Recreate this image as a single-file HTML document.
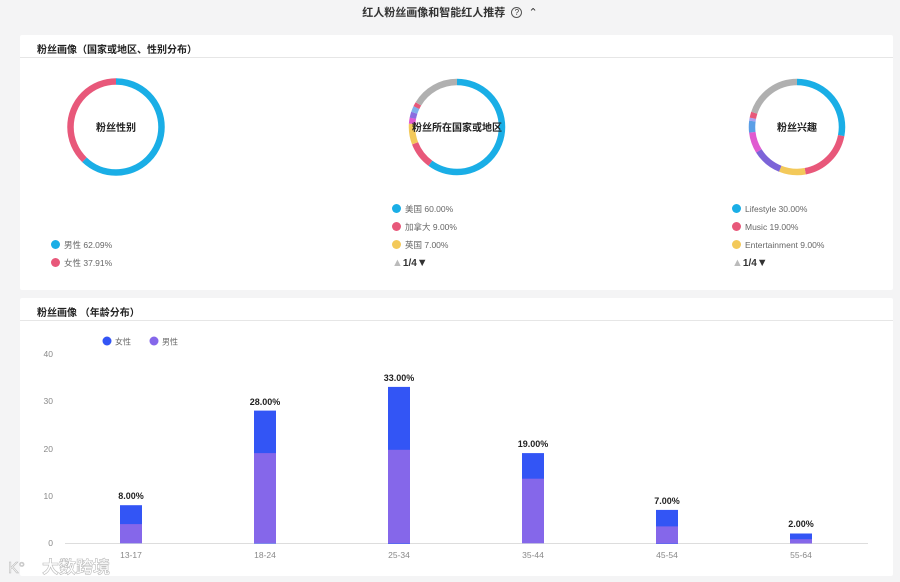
<!DOCTYPE html>
<html><head><meta charset="utf-8"><style>
*{margin:0;padding:0;box-sizing:border-box}
body{width:900px;height:582px;background:#f4f4f5;font-family:"Liberation Sans","Noto Sans CJK SC",sans-serif;position:relative;overflow:hidden;color:#222}
.title{position:absolute;top:4px;left:0;width:900px;text-align:center;font-size:11px;font-weight:bold;color:#333}
.card{position:absolute;left:20px;width:873px;background:#fff;border-radius:2px}
.hd{height:23px;border-bottom:1px solid #e6e6e6;font-size:10px;font-weight:bold;padding:6px 0 0 17px;color:#222}
.lg{position:absolute;font-size:8.5px;color:#666;line-height:18px}
.lg i{display:inline-block;width:9px;height:9px;border-radius:50%;margin-right:4px;vertical-align:-1px}
.pg{font-size:10px;color:#333;font-weight:bold}
.pg b{font-size:11px}
</style></head><body>
<div class="title">红人粉丝画像和智能红人推荐 &nbsp;<span style="display:inline-block;width:11px;height:11px;border:1px solid #555;border-radius:50%;font-size:8px;line-height:9px;vertical-align:1px;font-weight:normal">?</span> &nbsp;<span style="font-weight:normal">&#8963;</span></div>

<div class="card" style="top:35px;height:255px">
<div class="hd">粉丝画像（国家或地区、性别分布）</div>
</div>
<div class="card" style="top:298px;height:278px">
<div class="hd">粉丝画像 （年龄分布）</div>
</div>

<svg style="position:absolute;left:0;top:0" width="900" height="582">
<g fill="none" stroke-width="6.5">
<g transform="translate(116,127) rotate(-90)">
<circle r="45.5" stroke="#1aaee6" stroke-dasharray="177.5 300"/>
<circle r="45.5" stroke="#e8587a" stroke-dasharray="108.4 300" stroke-dashoffset="-177.5"/>
</g>
<g transform="translate(457,127) rotate(-90)">
<circle r="45" stroke="#1aaee6" stroke-dasharray="169.6 300"/>
<circle r="45" stroke="#e8587a" stroke-dasharray="25.4 300" stroke-dashoffset="-169.6"/>
<circle r="45" stroke="#f3c95a" stroke-dasharray="19.8 300" stroke-dashoffset="-195.1"/>
<circle r="45" stroke="#e05ad0" stroke-dasharray="5.7 300" stroke-dashoffset="-214.9"/>
<circle r="45" stroke="#8a6ee0" stroke-dasharray="5.7 300" stroke-dashoffset="-220.5"/>
<circle r="45" stroke="#7fb0ea" stroke-dasharray="5.7 300" stroke-dashoffset="-226.2"/>
<circle r="45" stroke="#e8587a" stroke-dasharray="4.2 300" stroke-dashoffset="-231.8"/>
<circle r="45" stroke="#b0b0b0" stroke-dasharray="46.6 300" stroke-dashoffset="-236.1"/>
</g>
<g transform="translate(797,127) rotate(-90)">
<circle r="45" stroke="#1aaee6" stroke-dasharray="79.2 300"/>
<circle r="45" stroke="#e8587a" stroke-dasharray="53.7 300" stroke-dashoffset="-79.2"/>
<circle r="45" stroke="#f3c95a" stroke-dasharray="25.4 300" stroke-dashoffset="-132.9"/>
<circle r="45" stroke="#7c64d8" stroke-dasharray="28.3 300" stroke-dashoffset="-158.3"/>
<circle r="45" stroke="#e05ad0" stroke-dasharray="19.8 300" stroke-dashoffset="-186.6"/>
<circle r="45" stroke="#5a9ee6" stroke-dasharray="11.3 300" stroke-dashoffset="-206.4"/>
<circle r="45" stroke="#a9a0f0" stroke-dasharray="2.8 300" stroke-dashoffset="-217.7"/>
<circle r="45" stroke="#e8587a" stroke-dasharray="5.7 300" stroke-dashoffset="-220.5"/>
<circle r="45" stroke="#b0b0b0" stroke-dasharray="56.5 300" stroke-dashoffset="-226.2"/>
</g>
</g>
<g font-size="10" font-weight="bold" fill="#222" text-anchor="middle" font-family="Liberation Sans,Noto Sans CJK SC,sans-serif">
<text x="116" y="131">粉丝性别</text>
<text x="457" y="131">粉丝所在国家或地区</text>
<text x="797" y="131">粉丝兴趣</text>
</g>

<g font-family="Liberation Sans,Noto Sans CJK SC,sans-serif">
<circle cx="107" cy="341" r="4.5" fill="#3355f5"/><text x="115" y="344.5" font-size="8" fill="#666">女性</text>
<circle cx="154" cy="341" r="4.5" fill="#8567ea"/><text x="162" y="344.5" font-size="8" fill="#666">男性</text>
<g font-size="8.5" fill="#888" text-anchor="end">
<text x="53" y="357">40</text><text x="53" y="404">30</text><text x="53" y="452">20</text><text x="53" y="499">10</text><text x="53" y="546">0</text>
</g>
<line x1="65" y1="543.5" x2="868" y2="543.5" stroke="#ddd" stroke-width="1"/>
<g fill="#3355f5">
<rect x="120" y="505.2" width="22" height="38"/>
<rect x="254" y="410.6" width="22" height="133"/>
<rect x="388" y="386.9" width="22" height="157"/>
<rect x="522" y="453.1" width="22" height="90"/>
<rect x="656" y="509.9" width="22" height="34"/>
<rect x="790" y="533.5" width="22" height="10"/>
</g>
<g fill="#8567ea">
<rect x="120" y="524.1" width="22" height="19"/>
<rect x="254" y="453.1" width="22" height="90"/>
<rect x="388" y="449.8" width="22" height="93.5"/>
<rect x="522" y="478.7" width="22" height="64.5"/>
<rect x="656" y="526.4" width="22" height="17"/>
<rect x="790" y="539.2" width="22" height="4.3"/>
</g>
<g font-size="9" font-weight="bold" fill="#222" text-anchor="middle">
<text x="131" y="499">8.00%</text>
<text x="265" y="405">28.00%</text>
<text x="399" y="381">33.00%</text>
<text x="533" y="447">19.00%</text>
<text x="667" y="504">7.00%</text>
<text x="801" y="527">2.00%</text>
</g>
<g font-size="8.5" fill="#888" text-anchor="middle">
<text x="131" y="558">13-17</text><text x="265" y="558">18-24</text><text x="399" y="558">25-34</text>
<text x="533" y="558">35-44</text><text x="667" y="558">45-54</text><text x="801" y="558">55-64</text>
</g>
<text x="42" y="573" font-size="17" fill="#fff" stroke="#bbb" stroke-width="0.6" font-weight="bold">大数跨境</text>
<text x="8" y="573" font-size="16" fill="#fff" stroke="#bbb" stroke-width="0.6">K°</text>
</g>
</svg>

<div class="lg" style="left:51px;top:236px"><div><i style="background:#1aaee6"></i>男性 62.09%</div><div><i style="background:#e8587a"></i>女性 37.91%</div></div>
<div class="lg" style="left:392px;top:200px"><div><i style="background:#1aaee6"></i>美国 60.00%</div><div><i style="background:#e8587a"></i>加拿大 9.00%</div><div><i style="background:#f3c95a"></i>英国 7.00%</div><div class="pg"><b style="color:#bbb">&#9650;</b>1/4<b>&#9660;</b></div></div>
<div class="lg" style="left:732px;top:200px"><div><i style="background:#1aaee6"></i>Lifestyle 30.00%</div><div><i style="background:#e8587a"></i>Music 19.00%</div><div><i style="background:#f3c95a"></i>Entertainment 9.00%</div><div class="pg"><b style="color:#bbb">&#9650;</b>1/4<b>&#9660;</b></div></div>
</body></html>
